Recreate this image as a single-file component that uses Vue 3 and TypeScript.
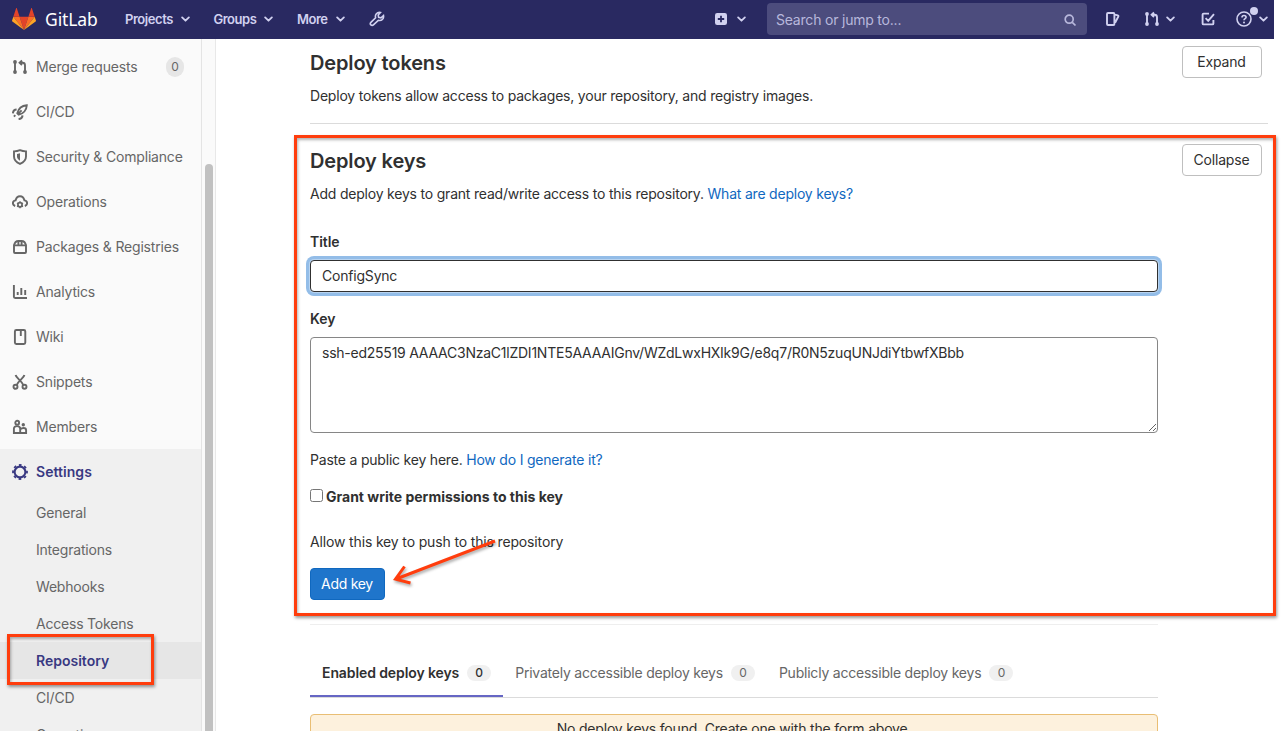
<script setup lang="ts">
import { ref } from 'vue'

interface NavItem {
  label: string
  icon: string
  count?: number
}

const nav: NavItem[] = [
  { label: 'Merge requests', icon: 'merge', count: 0 },
  { label: 'CI/CD', icon: 'rocket' },
  { label: 'Security & Compliance', icon: 'shield' },
  { label: 'Operations', icon: 'cloud' },
  { label: 'Packages & Registries', icon: 'package' },
  { label: 'Analytics', icon: 'chart' },
  { label: 'Wiki', icon: 'book' },
  { label: 'Snippets', icon: 'snippet' },
  { label: 'Members', icon: 'members' },
]
const settings = ['General', 'Integrations', 'Webhooks', 'Access Tokens', 'Repository', 'CI/CD', 'Operations']
const menus = ['Projects', 'Groups', 'More']
const tabs = ['Enabled deploy keys', 'Privately accessible deploy keys', 'Publicly accessible deploy keys']

const title = ref('ConfigSync')
const key = ref('ssh-ed25519 AAAAC3NzaC1lZDI1NTE5AAAAIGnv/WZdLwxHXIk9G/e8q7/R0N5zuqUNJdiYtbwfXBbb')
const canWrite = ref(false)
</script>

<template>
  <div class="page">
    <header class="topbar">
      <svg class="logo" viewBox="0 1.4 36 33" preserveAspectRatio="none">
        <path fill="#e24329" d="M18 34.38 11.38 14.38H24.62Z" />
        <path fill="#fc6d26" d="M18 34.38 11.38 14.38H2ZM18 34.38 24.62 14.38H34Z" />
        <path fill="#fca326" d="M2 14.38.1 20.16c-.2.53 0 1.1.46 1.44L18 34.38ZM34 14.38l1.9 5.78c.2.53 0 1.1-.46 1.44L18 34.38Z" />
        <path fill="#e24329" d="M2 14.38h9.38L7.35 1.97c-.2-.63-1.1-.63-1.31 0ZM34 14.38h-9.38l4.03-12.41c.2-.63 1.1-.63 1.31 0Z" />
      </svg>
      <span class="brand">GitLab</span>
      <nav class="menus">
        <span v-for="m in menus" :key="m" class="menu">
          {{ m }}
          <svg class="chev" viewBox="0 0 8 6"><path d="M1 1.2 4 4.2 7 1.2" /></svg>
        </span>
      </nav>
      <svg class="ico wrench" viewBox="0 0 16 16">
        <path d="M11.400 1.500C8 .9 5.700 3.500 6.600 6.700L1.900 11.400a1.700 1.700 0 0 0 2.500 2.500L9.300 9.300C12.700 10.200 15.100 7.800 14.500 4.600L12 6.900 9.600 6.400 9.200 4Z" />
      </svg>

      <div class="tools">
        <svg class="ico" viewBox="0 0 16 16">
          <rect x="2" y="2" width="12" height="12" rx="2.2" fill="currentColor" stroke="none" />
          <path class="cut" d="M8 4.8v6.4M4.8 8h6.4" />
        </svg>
        <svg class="chev plus-chev" viewBox="0 0 8 6"><path d="M1 1.2 4 4.2 7 1.2" /></svg>
        <div class="search">
          <span>Search or jump to...</span>
          <svg class="ico" viewBox="0 0 16 16"><circle cx="7.2" cy="7.2" r="4" /><path d="m10.3 10.3 3.2 3.2" /></svg>
        </div>
        <svg class="ico issues" viewBox="0 0 16 16">
          <path d="M3 2h5.400a1 1 0 0 1 1 1v10a1 1 0 0 1-1 1H3a1 1 0 0 1-1-1V3a1 1 0 0 1 1-1ZM10 3.600l2.800.7a.9.9 0 0 1 .6 1.100L10.200 11.500" />
        </svg>
        <svg class="ico mr" viewBox="0 0 16 16">
          <path d="M3 3v10M8 3.8h2.5c1.6 0 2.5.9 2.5 2.5V13M10 1.5 7.6 3.8 10 6" />
          <g fill="currentColor" stroke="none"><circle cx="3" cy="3" r="1.9" /><circle cx="3" cy="13" r="1.9" /><circle cx="13" cy="13" r="1.9" /></g>
        </svg>
        <svg class="chev mr-chev" viewBox="0 0 8 6"><path d="M1 1.2 4 4.2 7 1.2" /></svg>
        <svg class="ico todo" viewBox="0 0 16 16">
          <path d="M9 2.6H3.6a1 1 0 0 0-1 1v8.800a1 1 0 0 0 1 1h8.800a1 1 0 0 0 1-1V9M5.600 7.200l2.600 2.600L14 3.200" />
        </svg>
        <span class="help">
          <svg class="ico" viewBox="0 0 16 16">
            <circle cx="8" cy="8" r="7" /><path d="M6 6.4C6 5.2 6.8 4.5 8 4.5s2.1.7 2.1 1.8C10.1 7.7 8 7.7 8 9.3" /><circle cx="8" cy="11.6" r="1" fill="currentColor" stroke="none" />
          </svg>
          <i class="dot"></i>
        </span>
        <svg class="chev" viewBox="0 0 8 6"><path d="M1 1.2 4 4.2 7 1.2" /></svg>
      </div>
    </header>

    <div class="body">
      <aside class="sidebar">
        <div v-for="n in nav" :key="n.label" class="item">
          <svg class="ico" viewBox="0 0 16 16">
            <template v-if="n.icon === 'merge'">
              <path d="M3 3v10M8 3.8h2.5c1.6 0 2.5.9 2.5 2.5V13M10 1.5 7.6 3.8 10 6" />
              <g fill="currentColor" stroke="none"><circle cx="3" cy="3" r="1.9" /><circle cx="3" cy="13" r="1.9" /><circle cx="13" cy="13" r="1.9" /></g>
            </template>
            <template v-else-if="n.icon === 'rocket'">
              <path d="M5.3 9.2C6.4 4.8 10 1.6 14.8 1.2 14.6 6 11.200 9.600 6.800 10.700ZM5.300 10.700 9.600 6.400" />
              <path d="M4.600 5.500C2.600 5.600 1.100 7 .9 9.400M10.500 11.400c-.1 2-1.500 3.500-3.900 3.700" stroke-width="2" />
              <path d="M3.300 11.200 1.900 12.600" />
            </template>
            <template v-else-if="n.icon === 'shield'">
              <path d="M8 1.200c2 .9 4 1.200 6 1.200v5c0 3.600-2.500 5.900-6 7.500-3.500-1.600-6-3.900-6-7.500v-5c2 0 4-.3 6-1.200Z" />
              <path d="M8 4.200v7.500C6 10.500 5 9.300 5 7.500V5Z" fill="currentColor" stroke="none" />
            </template>
            <template v-else-if="n.icon === 'cloud'">
              <path d="M3.200 12C-.3 10.900.5 6.600 3.600 6.400 4.200 3.700 5.900 2.300 8 2.300s3.800 1.400 4.400 4.100c3.100.2 3.900 4.500.4 5.600" />
              <circle cx="8" cy="10.800" r="2" />
              <path d="M8 7.300v7M5 9l6 3.600M5 12.600 11 9" stroke-width="1.300" />
              <circle class="hole" cx="8" cy="10.800" r="1.200" />
            </template>
            <template v-else-if="n.icon === 'package'">
              <path d="M2 6.400h12V13a1 1 0 0 1-1 1H3a1 1 0 0 1-1-1ZM2 6.400C2.600 3.600 4.200 2 6.400 2h3.200c2.200 0 3.800 1.600 4.400 4.400M6.400 2v4M9.600 2v4" />
            </template>
            <template v-else-if="n.icon === 'chart'">
              <path d="M1.900 1v11.800a1.200 1.200 0 0 0 1.200 1.200H15M5.700 8v3M9.300 4v7M13.200 6v5" />
            </template>
            <template v-else-if="n.icon === 'book'">
              <rect x="2.900" y="1" width="10.400" height="14" rx="1.400" /><path d="M8.800 1v6" />
            </template>
            <template v-else-if="n.icon === 'snippet'">
              <path d="M3.600 1c.5 3 6 5.600 7.600 9.900M12.400 1c-.5 3-6 5.600-7.600 9.900" />
              <circle cx="3.500" cy="12.800" r="2" /><circle cx="12.500" cy="12.800" r="2" />
            </template>
            <template v-else>
              <circle cx="5.200" cy="3.700" r="1.900" /><circle cx="11.300" cy="5.700" r="1.700" fill="currentColor" stroke="none" />
              <path d="M1.900 14V9.800C1.900 8 3.200 7.100 5 7.100s3.200.9 3.200 2.700V14ZM8.200 14h5.900v-2.700c0-1.500-1.100-2.300-2.600-2.300-1.300 0-2.300.4-3 1.200" />
            </template>
          </svg>
          <span>{{ n.label }}</span>
          <span v-if="n.count !== undefined" class="badge">{{ n.count }}</span>
        </div>
        <div class="group">
          <div class="item current">
            <svg class="ico" viewBox="0 0 16 16">
              <circle cx="8" cy="8" r="5.400" stroke-width="2.100" />
              <circle cx="8" cy="8" r="7" stroke-width="1.800" stroke-dasharray="2.700 2.798" stroke-dashoffset="1.350" />
            </svg>
            <span>Settings</span>
          </div>
          <div v-for="s in settings" :key="s" class="sub" :class="{ selected: s === 'Repository' }">{{ s }}</div>
        </div>
      </aside>
      <div class="track"><div class="thumb"></div></div>

      <main class="content">
        <section class="block tokens">
          <div class="head"><h4>Deploy tokens</h4><button class="btn">Expand</button></div>
          <p class="lead">Deploy tokens allow access to packages, your repository, and registry images.</p>
        </section>

        <section class="block">
          <div class="head"><h4>Deploy keys</h4><button class="btn">Collapse</button></div>
          <p class="lead">Add deploy keys to grant read/write access to this repository. <a>What are deploy keys?</a></p>
        </section>

        <div class="form">
          <label class="lbl">Title</label>
          <input v-model="title" class="field focused" type="text" />
          <label class="lbl key">Key</label>
          <textarea v-model="key" class="field area" spellcheck="false"></textarea>
          <p class="hint">Paste a public key here. <a>How do I generate it?</a></p>
          <label class="check"><input v-model="canWrite" type="checkbox" /><span>Grant write permissions to this key</span></label>
          <p class="allow">Allow this key to push to this repository</p>
          <button class="btn primary">Add key</button>
          <hr />
          <div class="tabs">
            <div v-for="(t, i) in tabs" :key="t" class="tab" :class="{ active: i === 0 }">
              <span>{{ t }}</span><span class="badge">0</span>
            </div>
          </div>
          <div class="alert">No deploy keys found. Create one with the form above.</div>
        </div>
      </main>
    </div>

    <div class="mark mark-form"></div>
    <div class="mark mark-nav"></div>
    <svg class="arrow" viewBox="0 0 120 60"><path d="M110 5 11 43M19.500 30.500 10.500 43.200 25.500 47" /></svg>
  </div>
</template>

<style>
html, body { margin: 0; overflow: hidden; background: #fff; }
</style>

<style scoped>
* { box-sizing: border-box; }
.page { position: relative; width: 1281px; height: 731px; overflow: hidden; background: #fff; color: #303030; font: 14px/20px Inter, "Liberation Sans", sans-serif; letter-spacing: -0.205px; }
p, h4 { margin: 0; }
a { color: #1068bf; }
.ico { width: 16px; height: 16px; flex: none; fill: none; stroke: currentColor; stroke-width: 1.9; }
.chev { width: 9px; height: 6.750px; flex: none; fill: none; stroke: currentColor; stroke-width: 1.6; stroke-linecap: round; stroke-linejoin: round; }

.topbar { display: flex; align-items: center; width: 1274px; height: 39px; padding: 0 0 1px 12px; background: #292961; color: #d1d1f0; }
.logo { width: 24px; height: 22px; }
.brand { width: 79px; margin-left: 9px; color: #fff; font: 17.500px/22px "Noto Sans", "Open Sans", sans-serif; letter-spacing: -0.100px; }
.menus { display: flex; gap: 23.500px; margin-left: 1px; font-size: 13px; font-weight: 600; letter-spacing: -0.450px; }
.menu { display: flex; align-items: center; gap: 8px; }
.wrench { margin-left: 24px; stroke-width: 1.600; }
.tools { display: flex; align-items: center; margin-left: auto; padding-right: 6px; }
.cut { stroke: #292961; stroke-width: 1.800; }
.plus-chev { margin-left: 8px; }
.search { display: flex; align-items: center; justify-content: space-between; width: 320px; height: 32px; margin-left: 21px; padding: 2px 9px 0 9px; border-radius: 4px; background: #4c4c7d; color: #b8b8dc; font-size: 14px; }
.search .ico { stroke-width: 1.700; }
.issues { margin-left: 18px; }
.mr { margin-left: 23px; }
.mr-chev { margin-left: 6px; }
.todo { margin-left: 25px; }
.help { position: relative; display: flex; margin: 0 7px 0 20px; }
.help .ico { stroke-width: 1.600; }
.dot { position: absolute; top: -4px; right: -6px; width: 8px; height: 8px; border-radius: 50%; background: #d1d1f0; }

.body { display: flex; height: 692px; }
.sidebar { flex: none; width: 202px; padding-top: 5px; overflow: hidden; border-right: 1px solid #e4e4e4; background: #fafafa; color: #666; }
.item { display: flex; align-items: center; height: 45px; padding: 0 17px 0 12px; gap: 8px; letter-spacing: -0.180px; white-space: nowrap; }
.badge { width: 24px; border-radius: 10px; background: #f0f0f0; font-size: 12px; font-weight: 400; line-height: 16px; text-align: center; }
.item .badge { width: 18px; margin-left: auto; line-height: 20px; background: #e6e6e6; }
.group { height: 400px; background: #f0f0f0; }
.item.current { color: #393982; font-weight: 600; letter-spacing: 0.050px; }
.sub { height: 37px; padding-left: 36px; line-height: 37px; }
.sub.selected { background: #e6e6e6; color: #393982; font-weight: 600; letter-spacing: 0; }
.track { flex: none; width: 14px; padding: 125px 0 0 3px; border-right: 1px solid #e8e8e8; background: #fafafa; }
.thumb { width: 8px; height: 600px; border-radius: 4px; background: #c1c1c1; }
.hole { fill: #fafafa; stroke: none; }

.content { width: 1052px; padding-left: 94px; }
.block { padding-top: 20px; }
.block.tokens { height: 85px; padding-top: 7px; border-bottom: 1px solid #dbdbdb; }
.head { display: flex; justify-content: space-between; height: 33px; padding-right: 6px; }
h4 { font-size: 20px; font-weight: 600; line-height: 35px; letter-spacing: -0.140px; }
.btn { width: 80px; height: 32px; padding: 0 1px 0 0; border: 1px solid #bfbfbf; border-radius: 4px; background: #fff; color: #303030; font: inherit; letter-spacing: -0.200px; }
.lead { margin-top: 7px; }
.form { width: 848px; padding-top: 28px; }
.lbl { display: block; font-weight: 600; letter-spacing: -0.050px; }
.field { display: block; width: 848px; height: 32px; margin-top: 8px; padding: 0 11px 1px; border: 1px solid #868686; border-radius: 4px; background: #fff; color: #303030; font: inherit; letter-spacing: -0.200px; outline: 0; }
.focused { border-color: #303030; box-shadow: 0 0 0 1px #b9d4f0, 0 0 0 4px #93bde8; }
.key { margin-top: 17px; }
.area { height: 96px; padding: 5px 11px; resize: vertical; letter-spacing: -0.240px; }
.hint { margin-top: 17px; }
.check { display: flex; margin-top: 17px; font-weight: 700; letter-spacing: 0; gap: 3px; }
.check input { width: 13px; height: 13px; margin: 2px 0 0; }
.allow { margin-top: 25px; letter-spacing: -0.150px; }
.primary { display: block; width: 75px; margin-top: 16px; border-color: #1068bf; background: #1f75cb; color: #fff; letter-spacing: -0.300px; }
hr { height: 1px; margin: 24px 0 0; border: 0; background: #eee; }
.tabs { display: flex; height: 49px; margin-top: 24px; border-bottom: 1px solid #dbdbdb; color: #666; letter-spacing: -0.220px; }
.tab { display: flex; align-items: center; gap: 8px; height: 48px; padding: 0 12px; }
.active { border-bottom: 2px solid #6666c4; padding-top: 2px; color: #303030; font-weight: 600; letter-spacing: -0.100px; }
.active .badge { font-weight: 500; }
.alert { height: 40px; margin-top: 16px; padding-top: 4px; border: 1px solid #e9be74; border-radius: 4px; background: #fdf1dd; text-align: center; letter-spacing: -0.190px; }

.mark { position: absolute; border: 3px solid #ff3d0d; box-shadow: 1px 2px 3px rgba(0, 0, 0, .4), inset 1px 2px 3px rgba(0, 0, 0, .3); }
.mark-form { left: 294px; top: 135px; width: 982px; height: 481px; }
.mark-nav { left: 7px; top: 634px; width: 147px; height: 51px; }
.arrow { position: absolute; left: 385px; top: 536px; width: 120px; height: 60px; fill: none; stroke: #ff3d0d; stroke-width: 3; filter: drop-shadow(1px 2px 1.500px rgba(0, 0, 0, .35)); }
</style>
